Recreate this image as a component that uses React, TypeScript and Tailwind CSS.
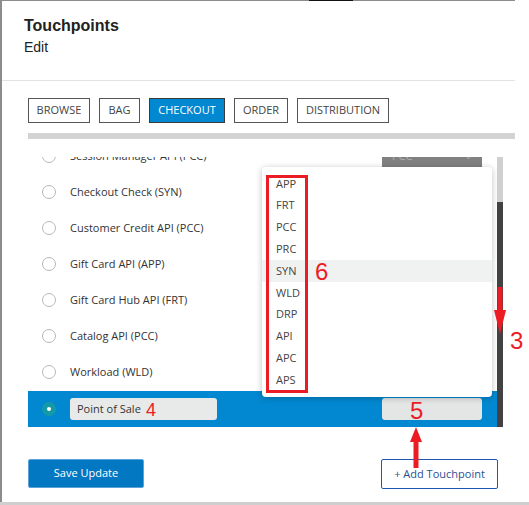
import React from 'react';

const tabs = [
  { label: 'BROWSE', w: 'w-[62px]' },
  { label: 'BAG', w: 'w-[41px]' },
  { label: 'CHECKOUT', w: 'w-[76px]', active: true },
  { label: 'ORDER', w: 'w-[54px]' },
  { label: 'DISTRIBUTION', w: 'w-[92px]' },
];

const touchpoints = [
  'Checkout Check (SYN)',
  'Customer Credit API (PCC)',
  'Gift Card API (APP)',
  'Gift Card Hub API (FRT)',
  'Catalog API (PCC)',
  'Workload (WLD)',
];

const codes = ['APP', 'FRT', 'PCC', 'PRC', 'SYN', 'WLD', 'DRP', 'API', 'APC', 'APS'];

const Radio = () => (
  <span className="ml-[14px] w-[14px] h-[14px] rounded-full border-[1.5px] border-[#b8b8b8] bg-white shrink-0" />
);

export default function App() {
  return (
    <div className="w-[529px] h-[505px] relative overflow-hidden bg-white flex flex-col font-['Open_Sans',sans-serif] text-[#333]">
      {/* modal */}
      <div className="h-[502px] w-[515px] bg-white border-t border-l-2 border-[#8c8c8c] flex flex-col">
        {/* header */}
        <div className="h-[80px] border-b border-[#e3e3e3] pl-[22px] pt-[15px] font-['Liberation_Sans',Arial,sans-serif]">
          <div className="text-[16px] font-bold leading-[20px] text-[#222]">Touchpoints</div>
          <div className="text-[14px] leading-[18px] mt-[2px] text-[#222]">Edit</div>
        </div>

        <div className="pl-[26px]">
          {/* tabs */}
          <div className="mt-[17px] flex gap-[9px]">
            {tabs.map((t) => (
              <div
                key={t.label}
                className={`${t.w} h-[25px] flex items-center justify-center text-[11px] border ${
                  t.active ? 'bg-[#0288d1] text-white border-[#3a3a3a]' : 'bg-white text-[#444] border-[#555]'
                }`}
              >
                {t.label}
              </div>
            ))}
          </div>

          <div className="mt-[10px] h-[6px] w-[487px] bg-[#d3d3d3]" />

          {/* list */}
          <div className="mt-[18px] flex h-[270px] w-[475px]">
            <div className="w-[469px] h-full overflow-hidden">
              <div className="-mt-[19px]">
                <div className="h-[36px] flex items-center">
                  <Radio />
                  <span className="ml-[14px] text-[11px]">Session Manager API (PCC)</span>
                  <div className="ml-auto mr-[15px] w-[100px] h-[22px] bg-[#808080] flex items-center justify-between px-[10px] text-[11px] text-[#b0b0b0]">
                    <span>PCC</span>
                    <span className="text-[8px]">⌄</span>
                  </div>
                </div>
                {touchpoints.map((t) => (
                  <div key={t} className="h-[36px] flex items-center">
                    <Radio />
                    <span className="ml-[14px] text-[11px]">{t}</span>
                  </div>
                ))}
                <div className="mt-[1px] h-[36px] bg-[#0288d1] flex items-center">
                  <span className="ml-[14px] w-[14px] h-[14px] rounded-full bg-[#139aa6] flex items-center justify-center shrink-0">
                    <span className="w-[4px] h-[4px] rounded-full bg-white" />
                  </span>
                  <div className="ml-[14px] w-[147px] h-[22px] rounded-[3px] bg-[#e8eaea] flex items-center pl-[7px] text-[11px]">
                    Point of Sale
                  </div>
                  <div className="ml-auto mr-[15px] w-[100px] h-[22px] rounded-[3px] bg-[#e4e6e6]" />
                </div>
              </div>
            </div>
            {/* scrollbar */}
            <div className="w-[6px] h-full flex flex-col">
              <div className="h-[45px] bg-[#d0d0d0]" />
              <div className="flex-1 bg-[#424242]" />
            </div>
          </div>

          {/* footer buttons */}
          <div className="mt-[32px] w-[470px] flex justify-between items-start">
            <button className="w-[116px] h-[29px] bg-[#0277c2] text-white text-[11px] rounded-[2px] border border-[#5aa3d8]">
              Save Update
            </button>
            <button className="w-[117px] h-[30px] bg-white text-[#2c4f93] text-[11px] border border-[#1d58b0] rounded-[2px]">
              + Add Touchpoint
            </button>
          </div>
        </div>
      </div>

      {/* page behind modal */}
      <div className="h-[3px] w-full bg-[#cfcfcf]" />

      <div className="absolute left-[309px] top-0 w-[44px] h-[1px] bg-[#111]" />

      {/* dropdown */}
      <div className="absolute left-[262px] top-[167px] w-[230px] h-[230px] bg-white rounded-[4px] shadow-[0_1px_6px_rgba(0,0,0,0.25)] pt-[6px]">
        {codes.map((c) => (
          <div
            key={c}
            className={`h-[21.8px] flex items-center pl-[14px] text-[11px] text-[#444] ${c === 'SYN' ? 'bg-[#f0f2f2]' : ''}`}
          >
            {c}
          </div>
        ))}
      </div>

      {/* annotations */}
      <div className="absolute left-[266px] top-[175px] w-[42px] h-[218px] border-[3px] border-[#ec1c24]" />
      <div className="absolute left-[315px] top-[260px] text-[24px] leading-[24px] text-[#ec1c24] font-['Liberation_Sans',Arial,sans-serif]">6</div>
      <div className="absolute left-[510px] top-[329px] text-[24px] leading-[24px] text-[#ec1c24] font-['Liberation_Sans',Arial,sans-serif]">3</div>
      <div className="absolute left-[410px] top-[399px] text-[24px] leading-[24px] text-[#ec1c24] font-['Liberation_Sans',Arial,sans-serif]">5</div>
      <div className="absolute left-[146px] top-[401px] text-[18px] leading-[18px] text-[#ec1c24] font-['Liberation_Sans',Arial,sans-serif]">4</div>
      <svg className="absolute left-0 top-0" width="529" height="505">
        <rect x="497.5" y="287" width="5" height="24" fill="#ec1c24" />
        <polygon points="494,310 506,310 500,334" fill="#ec1c24" />
        <polygon points="410,442 422,442 416,427" fill="#ec1c24" />
        <rect x="413.5" y="441" width="5" height="27" fill="#ec1c24" />
      </svg>
    </div>
  );
}
